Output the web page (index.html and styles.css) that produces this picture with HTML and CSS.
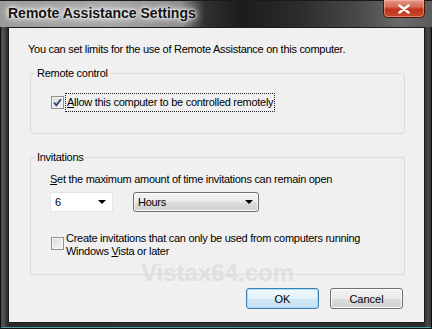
FILE: index.html
```html
<!DOCTYPE html>
<html>
<head>
<meta charset="utf-8">
<link rel="stylesheet" href="styles.css">
</head>
<body>
<div class="window">
  <div class="titlebar">
    <span class="title">Remote Assistance Settings</span>
    <div class="close">
      <svg width="14" height="10" viewBox="0 0 14 10"><path d="M2.5 1.5 L11.5 8.5 M11.5 1.5 L2.5 8.5" stroke="#f4f4f4" stroke-width="2.6" stroke-linecap="round"/></svg>
    </div>
  </div>
  <div class="client">
    <p class="intro">You can set limits for the use of Remote Assistance on this computer.</p>
    <fieldset class="group group-remote">
      <legend>Remote control</legend>
      <div class="check-row">
        <span class="checkbox"><svg width="11" height="11" viewBox="0 0 11 11"><path d="M2 5.5 L4.3 8.3 L9 2.2" fill="none" stroke="#2d4270" stroke-width="1.8"/></svg></span>
        <span class="check-label focus"><u>A</u>llow this computer to be controlled remotely</span>
      </div>
    </fieldset>
    <fieldset class="group group-inv">
      <legend>Invitations</legend>
      <div class="caption"><u>S</u>et the maximum amount of time invitations can remain open</div>
      <div class="combos">
        <div class="combo combo-edit"><span>6</span><i class="arrow"></i></div>
        <div class="combo combo-drop"><span>Hours</span><i class="arrow"></i></div>
      </div>
      <div class="check-row multi">
        <span class="checkbox"></span>
        <span class="check-label">Create invitations that can only be used from computers running<br>Windows <u>V</u>ista or later</span>
      </div>
    </fieldset>
    <div class="buttons">
      <button class="btn btn-default">OK</button>
      <button class="btn">Cancel</button>
    </div>
    <div class="watermark">Vistax64.com</div>
  </div>
</div>
</body>
</html>
```
FILE: styles.css
```css
html, body {
  margin: 0;
  padding: 0;
}
body {
  width: 432px;
  height: 329px;
  overflow: hidden;
  background: #2c2c2c;
  font-family: "Liberation Sans", Arial, sans-serif;
  font-size: 11px;
  letter-spacing: -0.28px;
  color: #000;
}
.window {
  height: 329px;
  display: flex;
  flex-direction: column;
  background: linear-gradient(to right, #3c3c3c 0, #555 3px, #3a3a3a 6px, #2a2a2a 8px, #333 50%, #2a2a2a calc(100% - 8px), #4a4a4a calc(100% - 4px), #2a2a2a 100%);
  box-shadow: inset 0 0 0 1px #101010, inset 0 -2px 0 #4c9aa0;
}
.titlebar {
  height: 27px;
  flex: none;
  display: flex;
  justify-content: space-between;
  align-items: flex-start;
  background: linear-gradient(to right, #9a9a9a 0, #a6a6a6 110px, #8c8c8c 180px, #303030 205px, #1c1c1c 240px, #2c2c2c 300px, #4a4a4a 360px, #6a6a6a 400px, #5a5a5a 432px);
  box-shadow: inset 0 1px 0 #1a1a1a;
}
.title {
  padding-left: 8px;
  line-height: 27px;
  font-family: "Liberation Sans", Arial, sans-serif;
  font-weight: bold;
  font-size: 14px;
  letter-spacing: 0;
  color: #141414;
  text-shadow: 0 0 6px #fff, 0 0 10px #eee, 0 0 3px #fff;
}
.close {
  width: 40px;
  height: 17px;
  margin-right: 7px;
  display: flex;
  align-items: center;
  justify-content: center;
  border: 1px solid #4a1408;
  border-top: none;
  border-radius: 0 0 5px 5px;
  background: linear-gradient(#e49a88 0, #d66a52 40%, #c0351c 55%, #c94a2e 100%);
  box-shadow: inset 0 0 0 1px rgba(255, 200, 190, 0.45);
}
.client {
  position: relative;
  height: 294px;
  margin: 0 7px 0 8px;
  border: 1px solid #1c1c1c;
  background: #f0f0f0;
  display: flex;
  flex-direction: column;
}
.intro {
  margin: 0;
  padding: 14px 0 0 19px;
  line-height: 15px;
  white-space: nowrap;
}
.group {
  margin: 0 19px 0 21px;
  padding: 0 0 0 19px;
  border: 1px solid #d5dde2;
  border-radius: 3px;
  min-inline-size: 0;
}
.group legend {
  margin-left: -15px;
  padding: 0 2px;
  line-height: 15px;
}
.group-remote {
  margin-top: 9px;
  padding-top: 13px;
  padding-bottom: 22px;
}
.group-inv {
  margin-top: 16px;
  padding-top: 7px;
  padding-bottom: 16px;
}
.check-row {
  display: flex;
  align-items: center;
  gap: 2px;
  line-height: 15px;
  white-space: nowrap;
}
.checkbox {
  width: 11px;
  height: 11px;
  flex: none;
  margin-left: 1px;
  border: 1px solid #8e8f8f;
  background: linear-gradient(135deg, #d6d9dd 0, #f7f7f7 100%);
  box-shadow: inset 0 0 0 1px #f4f4f4;
  display: flex;
}
.check-label.focus {
  outline: 1px dotted #222;
  outline-offset: 0;
  padding: 1px 1px;
}
.check-row.multi {
  margin-top: 20px;
  align-items: flex-start;
  line-height: 13px;
}
.check-row.multi .checkbox {
  margin-top: 5px;
}
.caption {
  line-height: 15px;
  white-space: nowrap;
}
.combos {
  display: flex;
  gap: 20px;
  margin-top: 5px;
}
.combo {
  height: 20px;
  box-sizing: border-box;
  display: flex;
  align-items: center;
  justify-content: space-between;
}
.combo-edit {
  width: 63px;
  padding: 0 6px 0 4px;
  background: #fff;
  border: 1px solid #e4e4e4;
}
.combo-drop {
  width: 126px;
  padding: 0 5px 0 4px;
  border: 1px solid #707070;
  border-radius: 3px;
  background: linear-gradient(#f2f2f2 0, #ebebeb 50%, #dddddd 50%, #cfcfcf 100%);
  box-shadow: inset 0 0 0 1px #fafafa;
}
.arrow {
  width: 0;
  height: 0;
  border-left: 4px solid transparent;
  border-right: 4px solid transparent;
  border-top: 4px solid #000;
}
.buttons {
  display: flex;
  justify-content: flex-end;
  gap: 11px;
  margin: 13px 21px 0 0;
}
.btn {
  width: 73px;
  height: 21px;
  padding: 0;
  font: inherit;
  color: #000;
  border: 1px solid #707070;
  border-radius: 3px;
  background: linear-gradient(#f2f2f2 0, #ebebeb 50%, #dddddd 50%, #cfcfcf 100%);
  box-shadow: inset 0 0 0 1px #fcfcfc;
}
.btn-default {
  border-color: #3c7fb1;
  background: linear-gradient(#f1f8fc 0, #e3f1fa 50%, #d2e8f6 50%, #c6e0f1 100%);
  box-shadow: inset 0 0 0 1px #a8dcf5;
}
.watermark {
  position: absolute;
  left: 132px;
  top: 231px;
  font-family: "Liberation Sans", Arial, sans-serif;
  font-weight: bold;
  font-size: 24px;
  letter-spacing: 0;
  color: #e0e0e0;
  pointer-events: none;
}
```
